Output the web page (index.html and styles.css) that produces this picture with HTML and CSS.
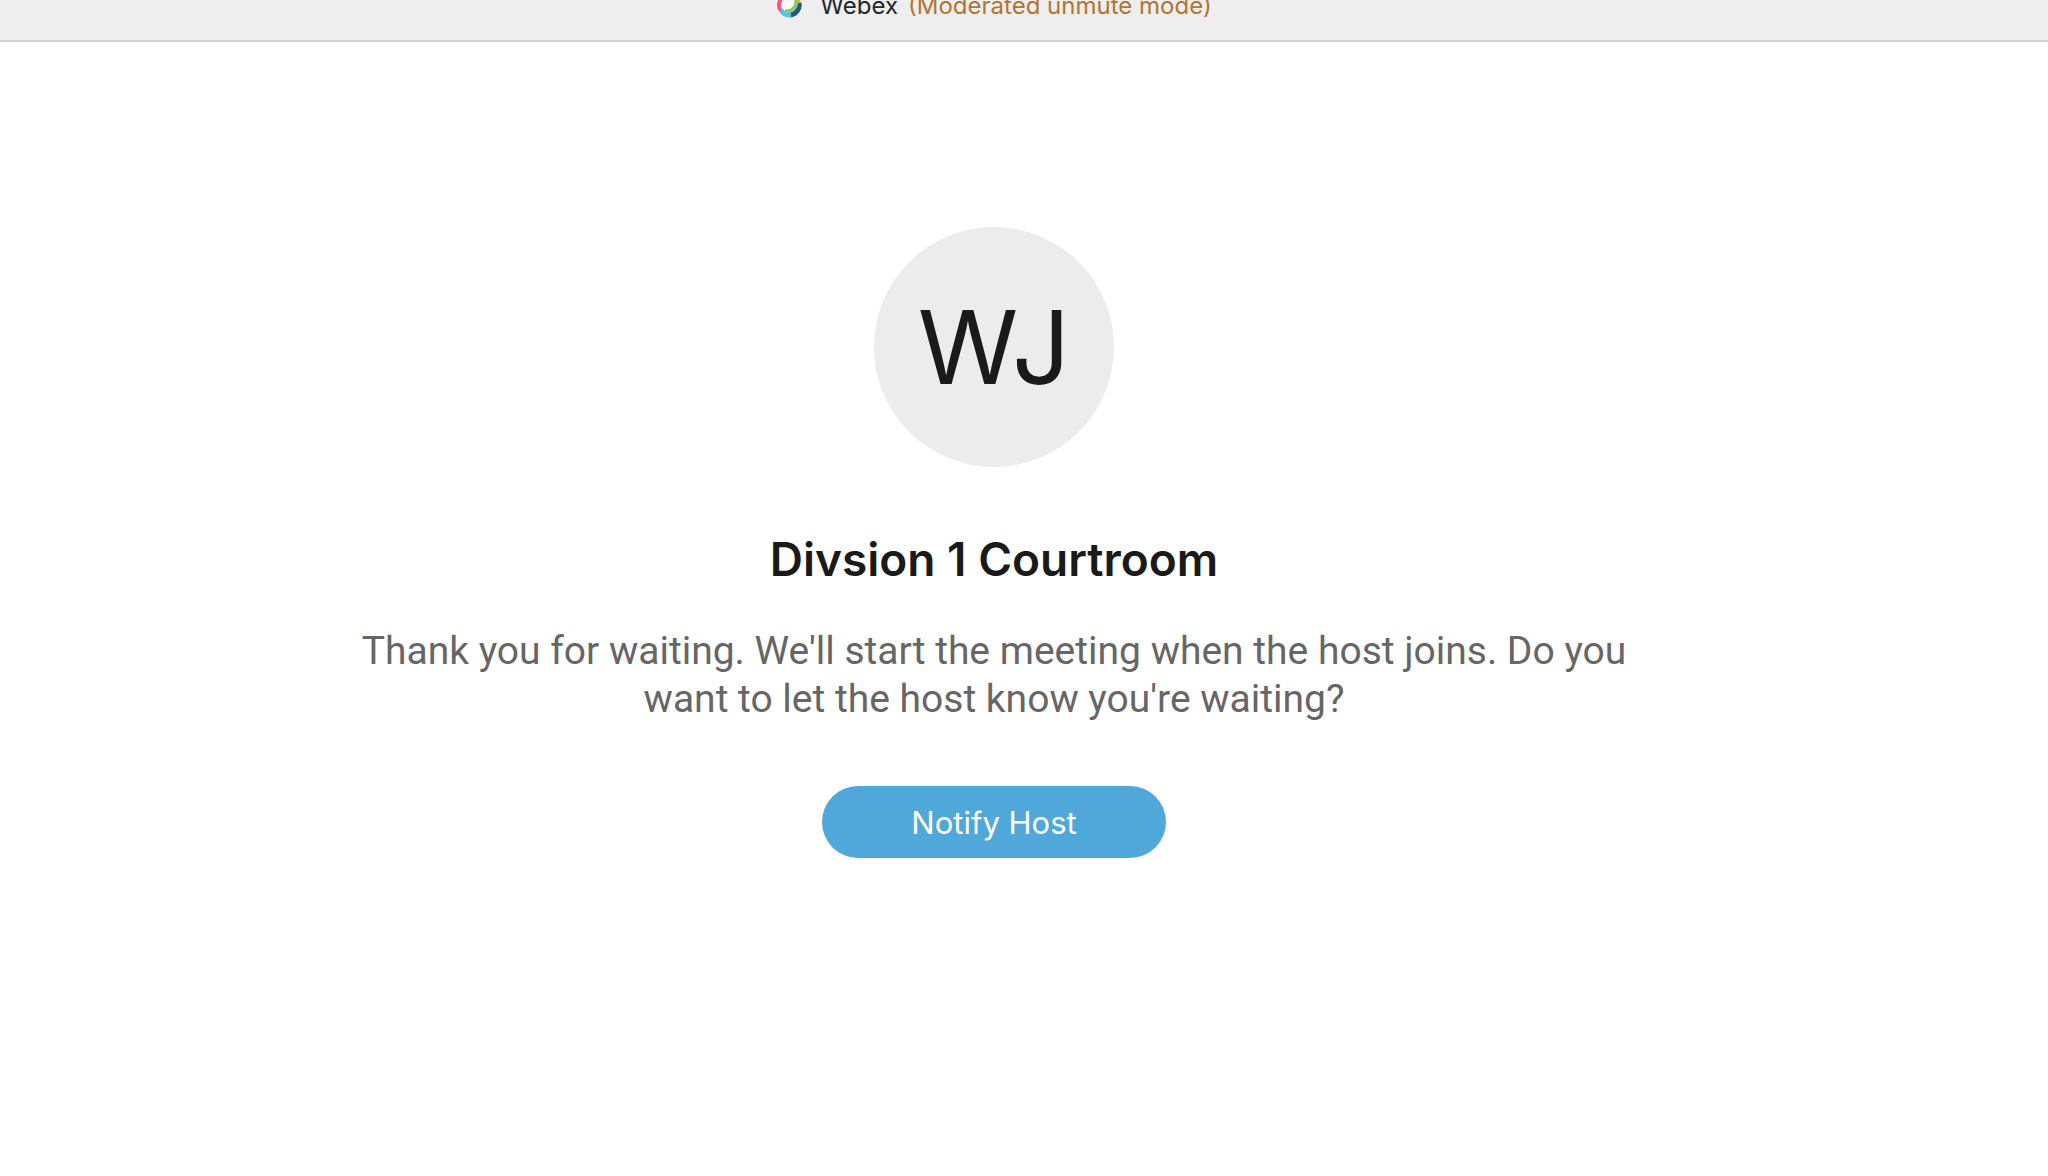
FILE: index.html
```
<!DOCTYPE html>
<html lang="en">
<head>
  <meta charset="UTF-8">
  <meta name="viewport" content="width=device-width, initial-scale=1">
  <title>Webex</title>
  <link rel="stylesheet" href="styles.css">
</head>
<body>

  <header class="titlebar">
    <svg class="logo" viewBox="0 0 26 26" aria-hidden="true">
      <circle cx="13" cy="13" r="13" fill="#fafafa"/>
      <g fill="none" stroke-width="5">
        <path d="M5 19 A10 10 0 0 1 13 3" stroke="#f4577c" stroke-width="4"/>
        <path d="M13 3 A10 10 0 0 1 23 12" stroke="#fbab3c" stroke-width="4"/>
        <path d="M23 11 A10 10 0 0 1 14 23" stroke="#1f5a80"/>
        <path d="M15 23 A10 10 0 0 1 5 18" stroke="#5abfee"/>
        <path d="M20 8 A9 9 0 0 1 9 19" stroke="#8cc56d" stroke-width="4"/>
      </g>
    </svg>
    <span class="app-name">Webex</span>
    <span class="mode">(Moderated unmute mode)</span>
  </header>

  <main class="lobby">
    <div class="avatar">WJ</div>
    <h1>Divsion 1 Courtroom</h1>
    <p>Thank you for waiting. We'll start the meeting when the host joins. Do you want to let the host know you're waiting?</p>
    <button type="button" class="notify">Notify Host</button>
  </main>

</body>
</html>
```

FILE: styles.css
```
* {
  margin: 0;
  padding: 0;
  box-sizing: border-box;
}

body {
  background: #fff;
  color: #1a1a1a;
  font-family: Inter, "Liberation Sans", sans-serif;
}

/* window title, its top edge runs off the screen */
.titlebar {
  display: flex;
  justify-content: center;
  align-items: flex-end;
  height: 42px;
  padding: 0 60px 22px 0;
  overflow: hidden;
  background: #eee;
  border-bottom: 2px solid #d0d0d0;
  font-size: 24px;
  line-height: 24px;
}

.logo {
  flex: none;
  width: 26px;
  height: 26px;
  margin-right: 18px;
}

.app-name {
  margin-right: 10px;
  color: #1f272b;
}

.mode {
  color: #b17431;
}

.lobby {
  display: flex;
  flex-direction: column;
  align-items: center;
  padding: 185px 60px 60px 0;
  text-align: center;
}

.avatar {
  display: flex;
  justify-content: center;
  align-items: center;
  width: 240px;
  height: 240px;
  border-radius: 50%;
  background: #ececec;
  font-size: 102px;
}

h1 {
  margin-top: 62px;
  font-size: 46px;
  font-weight: 600;
  line-height: 60px;
}

p {
  max-width: 1300px;
  margin-top: 38px;
  color: #666;
  font-family: Roboto, "Liberation Sans", sans-serif;
  font-size: 39px;
  line-height: 48px;
}

.notify {
  min-width: 344px;
  height: 72px;
  margin-top: 63px;
  border: none;
  border-radius: 36px;
  background: #50a7da;
  color: #fff;
  font-family: inherit;
  font-size: 31px;
  cursor: pointer;
}

.notify:hover {
  background: #3f97cb;
}
```
